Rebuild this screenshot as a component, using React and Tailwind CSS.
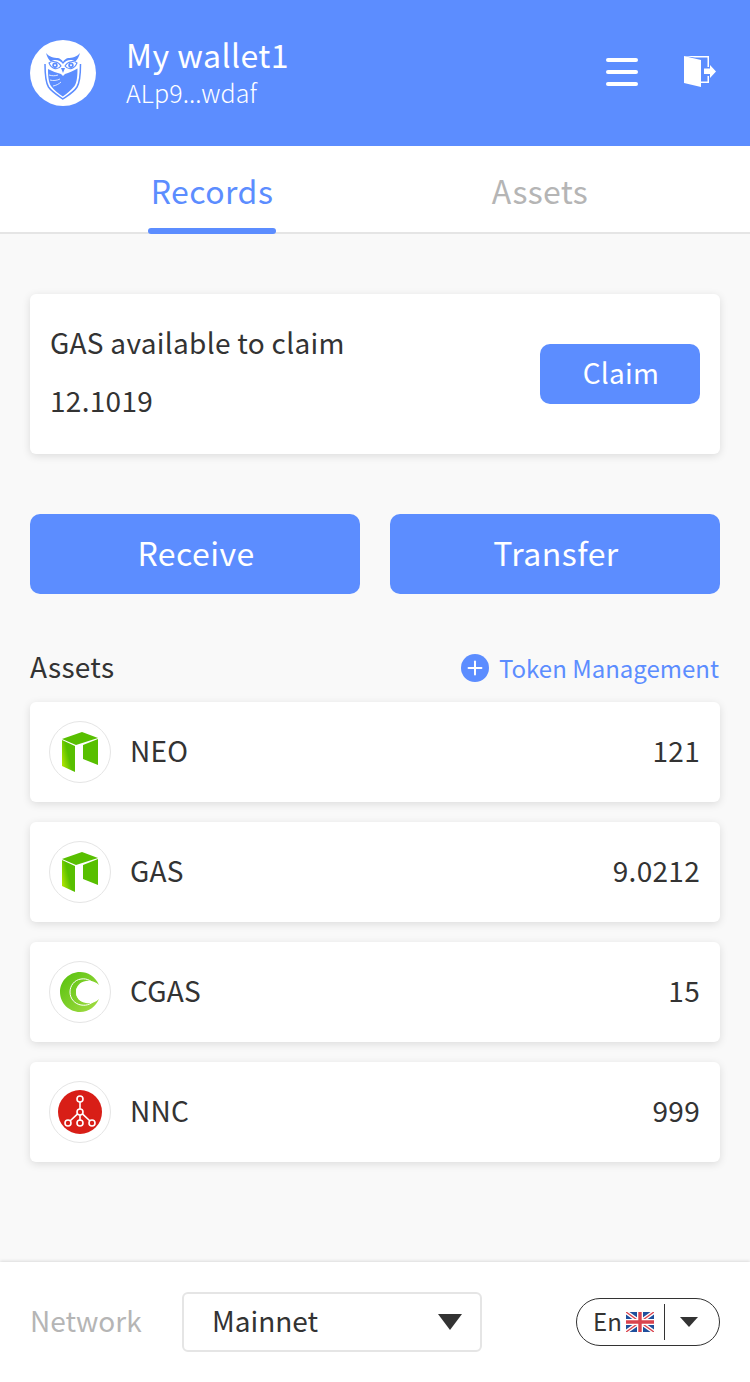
import React from "react";
import { Plus } from "lucide-react";

const FONT = "font-['Noto_Sans_CJK_SC','Noto_Sans',sans-serif]";

function OwlLogo() {
  return (
    <svg width="66" height="66" viewBox="0 0 66 66">
      <circle cx="33" cy="33" r="33" fill="#fff" />
      {/* shield outline */}
      <path d="M15 24 C15 34 15.5 42 18.5 47 C22 52 28 55.5 32.8 59 C38 55.5 44 52 47 47 C50 42 50.5 34 50.5 24" stroke="#5c8dff" strokeWidth="1.5" fill="none" />
      {/* scarf */}
      <path d="M18 29 C22 31 27 33 31 34 L33 36 L35 34 C39 33 43 31 47.5 28.5 C47.5 36 47 42 44.5 46 C41 50.5 37 53.5 32.8 56.5 C28.5 53.5 24 50.5 21 46 C18.5 42 18 36 18 29 Z" fill="#5c8dff" />
      <path d="M19 35 C22 36 25 36 28 35 M20 40 C23 41 27 40.5 30 39 M23 46 C26 45.5 29 44 31 42" stroke="#fff" strokeWidth="0.8" fill="none" />
      {/* brows */}
      <path d="M16 13 C19 17 24 18 28 18 C30 18.5 32 20 33 22 C34 20 36 18.5 38 18 C42 18 47 17 50 13 C49 17 47 20 45.5 21.5 C41 18.5 36 20 33 24 C30 20 25 18.5 20.5 21.5 C19 20 17 17 16 13 Z" fill="#5c8dff" />
      {/* eyes */}
      <path d="M19 23 C22 20.5 28 21 31 26 C28 30 22 30 19 23 Z" fill="#fff" stroke="#5c8dff" strokeWidth="1.1" />
      <path d="M47 23 C44 20.5 38 21 35 26 C38 30 44 30 47 23 Z" fill="#fff" stroke="#5c8dff" strokeWidth="1.1" />
      <circle cx="25" cy="25.2" r="2.7" fill="#5c8dff" />
      <circle cx="41" cy="25.2" r="2.7" fill="#5c8dff" />
      <circle cx="25" cy="25.2" r="1" fill="#fff" />
      <circle cx="41" cy="25.2" r="1" fill="#fff" />
      <path d="M31 28 L35 28 L33 33 Z" fill="#5c8dff" />
    </svg>
  );
}

function NeoIcon() {
  return (
    <svg width="38" height="42" viewBox="0 0 38 42">
      <defs>
        <linearGradient id="neoLeft" x1="0" y1="1" x2="1" y2="0.4">
          <stop offset="0" stopColor="#c4ee00" />
          <stop offset="0.6" stopColor="#58bf00" />
        </linearGradient>
      </defs>
      <path d="M1 8 L21 1 L37 7 L15 14 Z" fill="#58bf00" />
      <path d="M1 9 L14 15 L14 41 L1 35 Z" fill="url(#neoLeft)" />
      <path d="M22 14 L37 8 L37 34 L22 28 Z" fill="#58bf00" />
    </svg>
  );
}

function CgasIcon() {
  return (
    <svg width="42" height="42" viewBox="0 0 42 42">
      <defs>
        <linearGradient id="cgasFill" x1="0" y1="0" x2="1" y2="1">
          <stop offset="0" stopColor="#55c10c" />
          <stop offset="1" stopColor="#a6dd45" />
        </linearGradient>
      </defs>
      <path d="M40 14 C36 5 29 1 21 1 C10 1 1 10 1 21 C1 32 10 41 21 41 C30 41 37 35 40 28 C36 32 31 33 27 32 C21 31 17 27 17 21 C17 15 21 11 27 10 C32 9 37 11 40 14 Z" fill="url(#cgasFill)" />
      <path d="M38 17 C34 10 28 7 22 8 C15 9 11 15 11 21 C11 28 16 33 22 34 C28 35 33 33 38 27" stroke="#fff" strokeWidth="1" fill="none" />
      <path d="M38 18 C35 13 30 12 26 13 C21 14 18 17 18 21 C18 26 21 29 26 30 C31 31 35 28 38 25" stroke="#fff" strokeWidth="2" fill="none" />
    </svg>
  );
}

function NncIcon() {
  return (
    <svg width="44" height="44" viewBox="0 0 44 44">
      <circle cx="22" cy="22" r="22" fill="#d81e17" />
      <g stroke="#fff" strokeWidth="1.6" fill="none">
        <path d="M22 12 L22 19 M22 25 L22 31 M19.6 23.8 L12 31 M24.4 23.8 L32 31" />
        <circle cx="22" cy="9" r="3" />
        <circle cx="22" cy="22" r="3" />
        <circle cx="10" cy="33" r="3" />
        <circle cx="22" cy="33" r="3" />
        <circle cx="34" cy="33" r="3" />
      </g>
    </svg>
  );
}

function UkFlag() {
  return (
    <svg width="28" height="20" viewBox="0 0 28 20" className="shrink-0">
      <rect width="28" height="20" fill="#1f4f9c" />
      <path d="M0 0 L28 20 M28 0 L0 20" stroke="#fff" strokeWidth="4" />
      <path d="M0 0 L28 20 M28 0 L0 20" stroke="#d9434e" strokeWidth="1.4" />
      <path d="M14 0 V20 M0 10 H28" stroke="#fff" strokeWidth="6" />
      <path d="M14 0 V20 M0 10 H28" stroke="#d9434e" strokeWidth="3.4" />
    </svg>
  );
}

function DoorIcon() {
  return (
    <svg width="34" height="34" viewBox="0 0 34 34">
      <path d="M1 1 L26 1 L26 12 L24.5 12 L24.5 2.5 L12 2.5 Z" fill="#fff" />
      <path d="M1 1 L18 5 L18 32 L1 28 Z" fill="#fff" />
      <path d="M18 28 L26 28 L26 21 L24.5 21 L24.5 26.5 L18 26.5 Z" fill="#fff" />
      <path d="M21 13.5 L27 13.5 L27 10 L33 16.5 L27 23 L27 19 L21 19 Z" fill="#fff" />
    </svg>
  );
}

const assets = [
  { name: "NEO", amount: "121", icon: <NeoIcon /> },
  { name: "GAS", amount: "9.0212", icon: <NeoIcon /> },
  { name: "CGAS", amount: "15", icon: <CgasIcon /> },
  { name: "NNC", amount: "999", icon: <NncIcon /> },
];

function AssetRow({ name, amount, icon }) {
  return (
    <div className="h-[100px] bg-white rounded-[6px] shadow-[0_2px_8px_rgba(0,0,0,0.12)] flex items-center pl-[19px] pr-[20px]">
      <div className="w-[62px] h-[62px] rounded-full border border-[#e5e5e5] flex items-center justify-center shrink-0">
        {icon}
      </div>
      <span className="ml-[19px] mb-[4px] text-[28px] tracking-[0.3px] text-[#333]">{name}</span>
      <span className="ml-auto mb-[4px] text-[28px] tracking-[0.3px] text-[#333]">{amount}</span>
    </div>
  );
}

export default function App() {
  return (
    <div className={`w-[750px] h-[1382px] bg-[#f9f9f9] flex flex-col ${FONT}`}>
      {/* Header */}
      <header className="h-[146px] bg-[#5c8dff] flex items-center pl-[30px] pr-[33px] shrink-0">
        <OwlLogo />
        <div className="ml-[30px] text-white">
          <div className="text-[32px] leading-[40px] mt-[-2px] tracking-[0.45px]">My wallet1</div>
          <div className="text-[25px] leading-[36px] font-light tracking-[0.1px]">ALp9...wdaf</div>
        </div>
        <div className="ml-auto flex items-center gap-[45px] mb-[2px]">
          <div className="flex flex-col gap-[8px]">
            <div className="w-[32px] h-[4px] rounded-full bg-white" />
            <div className="w-[32px] h-[4px] rounded-full bg-white" />
            <div className="w-[32px] h-[4px] rounded-full bg-white" />
          </div>
          <DoorIcon />
        </div>
      </header>

      {/* Tabs */}
      <nav className="h-[88px] bg-white border-b-2 border-[#e5e5e5] flex shrink-0">
        <div className="w-[424px] flex justify-center">
          <div className="relative w-[128px] text-center text-[32px] leading-[88px] tracking-[0.45px] text-[#5c8dff]">
            Records
            <div className="absolute left-0 right-0 bottom-[-2px] h-[6px] rounded-[3px] bg-[#5c8dff]" />
          </div>
        </div>
        <div className="w-[232px] text-center text-[32px] leading-[88px] tracking-[0.35px] text-[#b5b5b5]">Assets</div>
      </nav>

      <main className="flex-1 px-[30px] pt-[60px] flex flex-col">
        {/* Claim card */}
        <section className="h-[160px] bg-white rounded-[6px] shadow-[0_2px_8px_rgba(0,0,0,0.12)] flex items-center pl-[21px] pr-[20px]">
          <div className="text-[#333] text-[28px] tracking-[0.3px] mb-[6px]">
            <div className="leading-[40px] ml-[-1px]">GAS available to claim</div>
            <div className="leading-[40px] mt-[18px] ml-[-1px]">12.1019</div>
          </div>
          <button className="ml-auto w-[160px] h-[60px] rounded-[10px] bg-[#5c8dff] text-white text-[28px] tracking-[0.3px] pb-[4px] pl-[2px]">Claim</button>
        </section>

        {/* Actions */}
        <div className="mt-[60px] flex gap-[30px]">
          <button className="flex-1 h-[80px] rounded-[10px] bg-[#5c8dff] text-white text-[32px] tracking-[0.45px] pb-[4px] pl-[2px]">Receive</button>
          <button className="flex-1 h-[80px] rounded-[10px] bg-[#5c8dff] text-white text-[32px] tracking-[0.45px] pb-[4px] pl-[2px]">Transfer</button>
        </div>

        {/* Assets */}
        <div className="mt-[54px] h-[40px] flex items-center justify-between">
          <span className="text-[28px] tracking-[0.3px] text-[#333] mb-[4px]">Assets</span>
          <span className="flex items-center text-[24px] text-[#5c8dff] mr-[1px]">
            <span className="w-[28px] h-[28px] rounded-full bg-[#5c8dff] flex items-center justify-center mr-[10px]">
              <Plus size={22} strokeWidth={2.2} color="#fff" />
            </span>
            Token Management
          </span>
        </div>
        <div className="mt-[14px] flex flex-col gap-[20px]">
          {assets.map((a) => (
            <AssetRow key={a.name} {...a} />
          ))}
        </div>
      </main>

      {/* Footer */}
      <footer className="h-[120px] bg-white shadow-[0_-1px_3px_rgba(0,0,0,0.12)] flex items-center pl-[30px] pr-[30px] shrink-0">
        <span className="w-[152px] text-[28px] text-[#b5b5b5] mb-[4px] shrink-0">Network</span>
        <div className="w-[300px] h-[60px] rounded-[6px] border-2 border-[#e5e5e5] flex items-center pl-[28px] pr-[18px]">
          <span className="text-[28px] text-[#333] mb-[4px]">Mainnet</span>
          <span className="ml-auto w-0 h-0 border-x-[12px] border-x-transparent border-t-[16px] border-t-[#333]" />
        </div>
        <div className="ml-auto w-[144px] h-[48px] rounded-full border border-[#333] flex items-center pl-[16px]">
          <span className="text-[24px] text-[#333] mb-[2px]">En</span>
          <span className="ml-[4px]"><UkFlag /></span>
          <span className="ml-[10px] w-px h-[36px] bg-[#333]" />
          <span className="ml-[15px] w-0 h-0 border-x-[9px] border-x-transparent border-t-[10px] border-t-[#333]" />
        </div>
      </footer>
    </div>
  );
}
